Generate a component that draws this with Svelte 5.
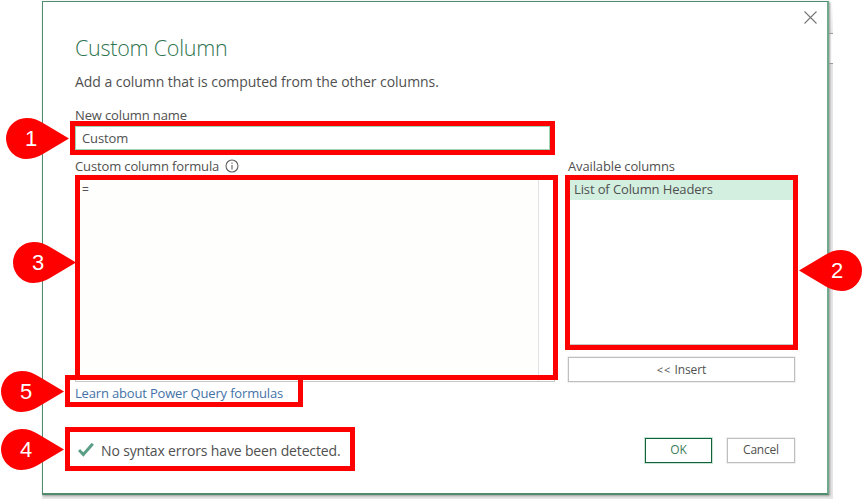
<script>
  const highlights = [
    { x: 70, y: 121, w: 485, h: 34 },
    { x: 75, y: 175, w: 483, h: 205 },
    { x: 565, y: 175, w: 233, h: 175 },
    { x: 65, y: 375, w: 238, h: 32 },
    { x: 65, y: 427, w: 290, h: 44 }
  ];
  const callouts = [
    { n: 1, x: 6, y: 118 },
    { n: 2, x: 799, y: 250, flip: true },
    { n: 3, x: 13, y: 242 },
    { n: 4, x: 1, y: 429 },
    { n: 5, x: 1, y: 371 }
  ];
  const columns = ['List of Column Headers'];
  let name = $state('Custom');
</script>

<main>
  <div class="backdrop">
    <div class="toolbar"></div>
    <div class="dialog">
      <button class="close" aria-label="Close">
        <svg width="13" height="13" viewBox="0 0 13 13"><path d="M.5 .5 12.5 12.5M12.5 .5 .5 12.5" /></svg>
      </button>
      <h1><span>Custom Column</span></h1>
      <p class="intro"><span>Add a column that is computed from the other columns.</span></p>
      <label class="label" for="name"><span>New column name</span></label>
      <input id="name" bind:value={name} />
      <div class="body">
        <section class="left">
          <div class="label">
            <span>Custom column formula</span>
            <svg class="info" width="14" height="14" viewBox="0 0 14 14"><circle cx="7" cy="7" r="6" /><path d="M7 6v4.4M7 3.5v1.3" /></svg>
          </div>
          <div class="formula"><div class="code">=</div><div class="scroll"></div></div>
          <a class="learn" href="#learn"><span>Learn about Power Query formulas</span></a>
        </section>
        <section class="right">
          <div class="label"><span>Available columns</span></div>
          <div class="list">
            {#each columns as column}<div class="item"><span>{column}</span></div>{/each}
          </div>
          <button class="btn insert"><span class="arrows">&lt;&lt;</span> Insert</button>
        </section>
      </div>
      <footer>
        <svg class="check" width="16" height="14" viewBox="0 0 16 14"><path d="M1 7 5.3 11.5 14.8 .8" /></svg>
        <span class="status">No syntax errors have been detected.</span>
        <button class="btn ok">OK</button>
        <button class="btn cancel">Cancel</button>
      </footer>
    </div>
  </div>

  {#each highlights as h}
    <div class="highlight" style="left:{h.x}px;top:{h.y}px;width:{h.w}px;height:{h.h}px"></div>
  {/each}
  {#each callouts as c}
    <div class="callout" class:flip={c.flip} style="left:{c.x}px;top:{c.y}px">
      <svg width="63" height="41" viewBox="0 0 63 41"><path d="M20.5 0C27 0 32 2 37 4.9L63 20.5 37 36.1C32 39 27 41 20.5 41A20.5 20.5 0 0 1 20.5 0Z" /></svg>
      <span>{c.n}</span>
    </div>
  {/each}
</main>

<style>
  :global(body) { margin: 0; background: #fff; }
  * { box-sizing: border-box; }
  main { position: relative; width: 863px; height: 499px; overflow: hidden; font-family: "Open Sans", "Noto Sans", sans-serif; color: #505050; }
  .backdrop { position: relative; width: 791px; height: 499px; margin-left: 42px; padding-top: 1px; background: linear-gradient(#fff 0 2px, #e6e6e6 40px); }
  .toolbar { position: absolute; right: 0; top: 33px; width: 6px; height: 31px; background: #fff; border-top: 1px solid #999; border-bottom: 1px solid #999; }
  .dialog { position: relative; display: flex; flex-direction: column; width: 787px; height: 494px; padding: 32px 33px 0 32px; border: 1px solid #4f8c6d; border-right: 2px solid #70a98c; border-bottom: 2px solid #508c6c; background: #fff; box-shadow: 1px 1px 2px #999; }
  h1, p { margin: 0; }
  span { white-space: nowrap; }
  button { font-family: inherit; padding: 0; border-radius: 0; }
  .close { position: absolute; right: 10px; top: 9px; width: 13px; height: 13px; border: 0; background: none; line-height: 0; }
  .close path { stroke: #777; stroke-width: 1.1; }
  svg { flex: none; fill: none; display: block; }
  h1 { height: 28px; font-size: 21.5px; line-height: 28px; font-weight: 300; color: #2f7450; letter-spacing: -.25px; }
  .intro { height: 22px; margin-top: 9px; font-size: 14px; line-height: 22px; letter-spacing: -.05px; }
  .label { display: flex; align-items: center; height: 18px; font-size: 13px; line-height: 18px; letter-spacing: -.13px; }
  label.label { margin-top: 13px; }
  input { width: 475px; height: 24px; margin-top: 2px; border: 1px solid #9bd3b5; padding: 0 5px 0 6px; font: 13px "Open Sans", sans-serif; letter-spacing: -.1px; color: #505050; border-radius: 0; outline: none; }
  .body { display: flex; justify-content: space-between; width: 720px; margin-top: 7px; }
  .body .label { height: 19px; padding-bottom: 1px; }
  .left { width: 480px; }
  .right { width: 227px; }
  .info { margin-left: 6px; }
  .info circle, .info path { stroke: #606060; stroke-width: 1.1; }
  .formula { display: flex; height: 206px; border: 1px solid #c8c8c8; background: #fefefc; }
  .code { flex: 1; padding: 4px 6px; font-size: 12px; line-height: 17px; }
  .scroll { width: 16px; border-left: 1px solid #e2e2e2; background: #fff; }
  .learn { display: block; height: 22px; margin-top: 1px; font-size: 13px; line-height: 21px; letter-spacing: -.17px; color: #4472a8; text-decoration: none; }
  .list { height: 169px; border: 1px solid #c8c8c8; padding-top: 3px; background: #fff; }
  .item { height: 20px; padding-left: 5px; background: #d2efe0; font-size: 13px; line-height: 18px; letter-spacing: -.12px; }
  .btn { height: 25px; border: 1px solid #bebebe; background: #fff; font-size: 12px; line-height: 22px; color: #505050; box-shadow: 0 0 0 .5px #ddd; }
  .insert { display: block; width: 227px; margin-top: 12px; letter-spacing: -.1px; }
  .arrows { letter-spacing: 1px; font-size: 11px; }
  footer { display: flex; align-items: center; width: 720px; height: 30px; margin-top: 30px; }
  .check { margin-left: 3px; }
  .check path { stroke: #5a9e85; stroke-width: 3; }
  .status { margin-left: 7px; padding-top: 1px; font-size: 14px; letter-spacing: -.15px; }
  .ok { width: 67px; margin-left: auto; border-color: #116339; color: #3c7d5b; box-shadow: 0 0 0 1px #c8e2d4; }
  .cancel { width: 68px; margin-left: 15px; letter-spacing: -.2px; }
  .highlight { position: absolute; border: 5px solid #f00; pointer-events: none; }
  .callout { position: absolute; width: 63px; height: 41px; }
  .callout path { fill: #f00; }
  .callout span { position: absolute; left: 14px; top: 8px; width: 22px; text-align: center; font: 22px/25px "Liberation Sans", Arial, sans-serif; color: #fff; }
  .flip svg { transform: scaleX(-1); }
  .flip span { left: 27px; }
</style>
